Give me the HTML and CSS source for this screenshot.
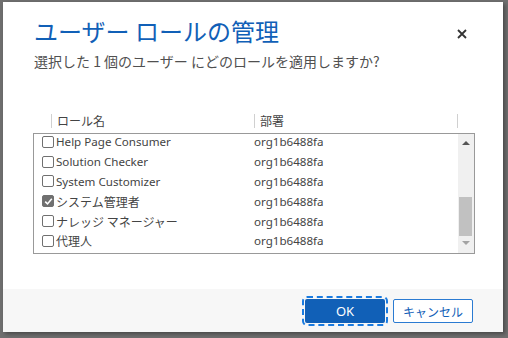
FILE: index.html
```html
<!DOCTYPE html>
<html lang="ja">
<head>
<meta charset="utf-8">
<link rel="stylesheet" href="styles.css">
</head>
<body>
<div class="dialog">
  <div class="head">
    <h1 class="title">ユーザー ロールの管理</h1>
    <button class="close" aria-label="閉じる">
      <svg width="10" height="10" viewBox="0 0 10 10"><path d="M1 1L9 9M9 1L1 9" stroke="#333" stroke-width="1.8" fill="none"/></svg>
    </button>
    <p class="sub">選択した 1 個のユーザー にどのロールを適用しますか?</p>
  </div>
  <div class="grid">
    <div class="ghead">
      <div class="hcell hname">ロール名</div>
      <div class="hcell hdept">部署</div>
      <div class="hcell hend"></div>
    </div>
    <div class="box">
      <div class="rows">
        <div class="row"><span class="cb"></span><span class="name">Help Page Consumer</span><span class="dept">org1b6488fa</span></div>
        <div class="row"><span class="cb"></span><span class="name">Solution Checker</span><span class="dept">org1b6488fa</span></div>
        <div class="row"><span class="cb"></span><span class="name">System Customizer</span><span class="dept">org1b6488fa</span></div>
        <div class="row"><span class="cb on"><svg width="9" height="9" viewBox="0 0 9 9"><path d="M1.2 4.6L3.5 6.9L7.8 1.8" stroke="#fff" stroke-width="1.6" fill="none"/></svg></span><span class="name jp">システム管理者</span><span class="dept">org1b6488fa</span></div>
        <div class="row"><span class="cb"></span><span class="name jp">ナレッジ マネージャー</span><span class="dept">org1b6488fa</span></div>
        <div class="row"><span class="cb"></span><span class="name jp">代理人</span><span class="dept">org1b6488fa</span></div>
      </div>
      <div class="sbar">
        <span class="arr up"></span>
        <span class="thumb"></span>
        <span class="arr down"></span>
      </div>
    </div>
  </div>
  <div class="foot">
    <button class="btn ok">OK</button>
    <button class="btn cancel">キャンセル</button>
  </div>
</div>
</body>
</html>
```
FILE: styles.css
```css
* { box-sizing: border-box; }
html, body { margin: 0; padding: 0; }
body {
  width: 508px;
  height: 338px;
  background: #6f6f6f;
  padding: 2px 0 0 3px;
  font-family: "Noto Sans", "Noto Sans CJK JP", sans-serif;
  overflow: hidden;
}
.dialog {
  width: 500px;
  height: 330px;
  background: #fff;
  display: flex;
  flex-direction: column;
  box-shadow: 2px 2px 4px rgba(0,0,0,0.35);
}
.head {
  position: relative;
  padding: 13px 30px 0 31px;
}
.title {
  margin: 0;
  font-weight: normal;
  font-size: 24px;
  line-height: 32px;
  color: #1160b7;
  font-family: "Noto Sans CJK JP", sans-serif;
}
.close {
  position: absolute;
  right: 34px;
  top: 25px;
  width: 14px;
  height: 14px;
  padding: 0;
  border: 0;
  background: transparent;
  display: flex;
  align-items: center;
  justify-content: center;
}
.sub {
  margin: 4px 0 0 0;
  font-size: 14px;
  line-height: 20px;
  color: #505050;
  font-family: "Noto Sans CJK JP", sans-serif;
}
.grid {
  margin: 38px 0 0 30px;
  width: 442px;
}
.ghead {
  display: flex;
  height: 24px;
  align-items: center;
}
.hcell {
  height: 14px;
  border-left: 1px solid #d0d0d0;
  font-size: 12px;
  line-height: 14px;
  color: #444;
  padding-left: 5px;
  font-family: "Noto Sans CJK JP", sans-serif;
}
.hname { margin-left: 18px; width: 203px; }
.hdept { width: 203px; }
.hend { width: 1px; }
.box {
  position: relative;
  height: 121px;
  border: 1px solid #999;
  overflow: hidden;
}
.rows { margin-top: -2px; padding-left: 8px; }
.row {
  display: flex;
  align-items: center;
  height: 19.8px;
  font-size: 11.6px;
  color: #444;
}
.cb {
  width: 12px;
  height: 12px;
  border: 1px solid #707070;
  border-radius: 2px;
  display: flex;
  align-items: center;
  justify-content: center;
  flex: none;
}
.cb.on { background: #707070; }
.name { width: 199px; padding-left: 2px; white-space: nowrap; }
.name.jp { font-family: "Noto Sans CJK JP", sans-serif; font-size: 12px; }
.dept { padding-left: 1px; }
.sbar {
  position: absolute;
  right: 0;
  top: 0;
  bottom: 0;
  width: 16px;
  background: #f0f0f0;
}
.arr {
  position: absolute;
  left: 4px;
  width: 0;
  height: 0;
  border-left: 4px solid transparent;
  border-right: 4px solid transparent;
}
.arr.up { top: 7px; border-bottom: 4px solid #555; }
.arr.down { bottom: 8px; border-top: 4px solid #a3a3a3; }
.thumb {
  position: absolute;
  left: 1px;
  right: 2px;
  top: 63px;
  height: 39px;
  background: #c1c1c1;
}
.foot {
  margin-top: auto;
  height: 43px;
  background: #f7f7f7;
  display: flex;
  justify-content: flex-end;
  align-items: flex-start;
  gap: 8px;
  padding: 10px 30px 0 0;
}
.btn {
  width: 80px;
  height: 24px;
  border-radius: 2px;
  font-size: 13px;
  font-family: "Noto Sans", "Noto Sans CJK JP", sans-serif;
  padding: 0;
}
.ok {
  background: #1160b7;
  color: #fff;
  border: 0;
  outline: 2px dashed #1a7be0;
  outline-offset: 1px;
}
.cancel {
  background: #fff;
  color: #1160b7;
  border: 1px solid #2b7bd2;
  font-family: "Noto Sans CJK JP", sans-serif;
  font-size: 12px;
}
```
